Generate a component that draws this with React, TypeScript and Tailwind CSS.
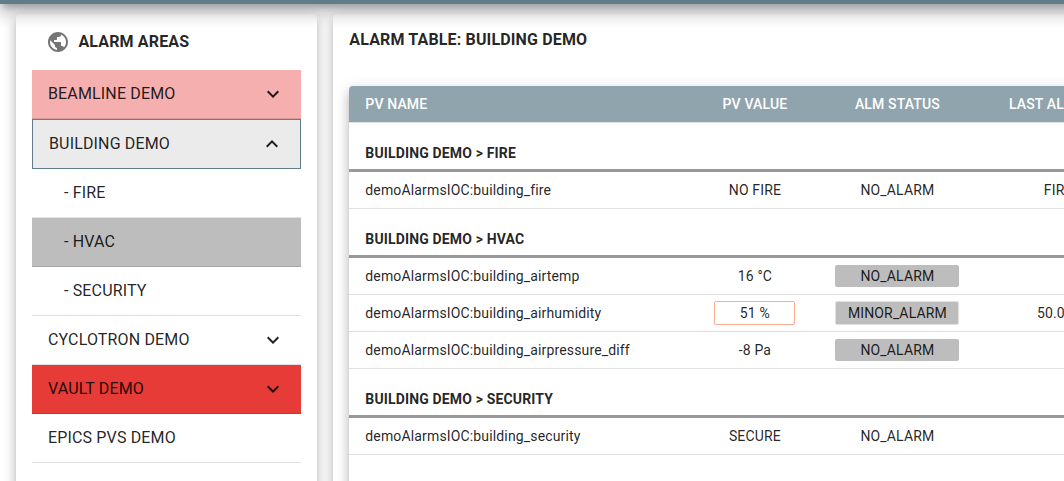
import { MdExpandLess, MdExpandMore, MdPublic } from "react-icons/md";

type Area = { label: string; tone: string; icon?: "more" | "less" };

const areas: Area[] = [
  { label: "BEAMLINE DEMO", tone: "h-[49px] border-b border-black/12 bg-[#f6afaf] px-4", icon: "more" },
  { label: "BUILDING DEMO", tone: "h-[50px] border border-[#607d8b] bg-[#ebebeb] px-4", icon: "less" },
  { label: "- FIRE", tone: "h-[49px] border-b border-black/12 pl-8" },
  { label: "- HVAC", tone: "h-[49px] border-b border-black/12 bg-[#bdbdbd] pl-8" },
  { label: "- SECURITY", tone: "h-[49px] border-b border-black/12 pl-8" },
  { label: "CYCLOTRON DEMO", tone: "h-[49px] border-b border-black/12 px-4", icon: "more" },
  { label: "VAULT DEMO", tone: "h-[49px] border-b border-black/12 bg-[#e73b37] px-4", icon: "more" },
  { label: "EPICS PVS DEMO", tone: "h-[49px] border-b border-black/12 px-4" },
];

type Pv = {
  name: string;
  value: string;
  status: string;
  last?: string;
  valueBox?: string;
  statusBox?: string;
};

const groups: { title: string; rows: Pv[] }[] = [
  {
    title: "BUILDING DEMO > FIRE",
    rows: [{ name: "demoAlarmsIOC:building_fire", value: "NO FIRE", status: "NO_ALARM", last: "FIRE !" }],
  },
  {
    title: "BUILDING DEMO > HVAC",
    rows: [
      { name: "demoAlarmsIOC:building_airtemp", value: "16 °C", status: "NO_ALARM", statusBox: "h-[22px] bg-[#bdbdbd]" },
      {
        name: "demoAlarmsIOC:building_airhumidity",
        value: "51 %",
        status: "MINOR_ALARM",
        last: "50.00 %",
        valueBox: "border border-[#ffab91]",
        statusBox: "h-6 border border-[#e0e0e0] bg-[#bdbdbd]",
      },
      { name: "demoAlarmsIOC:building_airpressure_diff", value: "-8 Pa", status: "NO_ALARM", statusBox: "h-[22px] bg-[#bdbdbd]" },
    ],
  },
  {
    title: "BUILDING DEMO > SECURITY",
    rows: [{ name: "demoAlarmsIOC:building_security", value: "SECURE", status: "NO_ALARM" }],
  },
];

const columns = "grid grid-cols-[334.9px_142px_143px_186px] items-center";
const raised =
  "shadow-[0px_5px_5px_-3px_rgba(0,0,0,0.2),0px_8px_10px_1px_rgba(0,0,0,0.14),0px_3px_14px_2px_rgba(0,0,0,0.12)]";

function AreaItem({ area }: { area: Area }) {
  return (
    <li className={`flex items-center justify-between ${area.tone}`}>
      <span>{area.label}</span>
      {area.icon === "more" && <MdExpandMore size={24} />}
      {area.icon === "less" && <MdExpandLess size={24} />}
    </li>
  );
}

function PvRow({ pv }: { pv: Pv }) {
  return (
    <div className={`${columns} h-[37px] border-b border-[#e0e0e0]`}>
      <span className="pl-[16.3px]">{pv.name}</span>
      <span className={`flex h-6 w-[81px] items-center justify-center justify-self-center rounded-xs ${pv.valueBox ?? ""}`}>
        {pv.value}
      </span>
      <span className={`flex w-[124px] items-center justify-center justify-self-center rounded-xs ${pv.statusBox ?? ""}`}>
        {pv.status}
      </span>
      <span className="text-center">{pv.last}</span>
    </div>
  );
}

export default function App() {
  return (
    <div className="h-[481px] w-[1064px] overflow-hidden bg-white font-['Roboto',sans-serif] text-base tracking-[0.00938em] text-black/87">
      <header className="relative z-10 -mt-[60px] h-16 w-[1200px] bg-[#607d8b] shadow-[0px_6px_6px_-3px_rgba(0,0,0,0.2),0px_10px_14px_1px_rgba(0,0,0,0.14),0px_4px_18px_3px_rgba(0,0,0,0.12)]" />
      <main className="flex gap-4 pt-2.5 pl-4">
        <aside className={`h-[520px] w-[301px] shrink-0 rounded bg-white px-4 ${raised}`}>
          <h2 className="flex h-14 items-center gap-2 pl-[14.4px] font-bold">
            <MdPublic size={24} className="text-black/54" />
            ALARM AREAS
          </h2>
          <ul>
            {areas.map((area) => (
              <AreaItem key={area.label} area={area} />
            ))}
          </ul>
        </aside>
        <section className={`h-[520px] w-[843px] shrink-0 rounded bg-white px-4 ${raised}`}>
          <h1 className="flex h-[72px] items-start pt-3.5 pl-[0.3px] leading-6 font-bold">ALARM TABLE: BUILDING DEMO</h1>
          <div className={`h-[460px] overflow-hidden rounded bg-white text-sm tracking-[0.01071em] ${raised}`}>
            <div className={`${columns} h-[37px] border-b border-[#e0e0e0] bg-[#90a4ae] text-center font-medium text-white`}>
              <span className="pl-[16.3px] text-left">PV NAME</span>
              <span>PV VALUE</span>
              <span>ALM STATUS</span>
              <span className="pl-2">LAST ALM VALUE</span>
            </div>
            {groups.map((group) => (
              <div key={group.title}>
                <h3 className="flex h-[49px] items-end border-b-3 border-[#999] pb-1.5 pl-[16.3px] font-bold">{group.title}</h3>
                {group.rows.map((pv) => (
                  <PvRow key={pv.name} pv={pv} />
                ))}
              </div>
            ))}
          </div>
        </section>
      </main>
    </div>
  );
}
